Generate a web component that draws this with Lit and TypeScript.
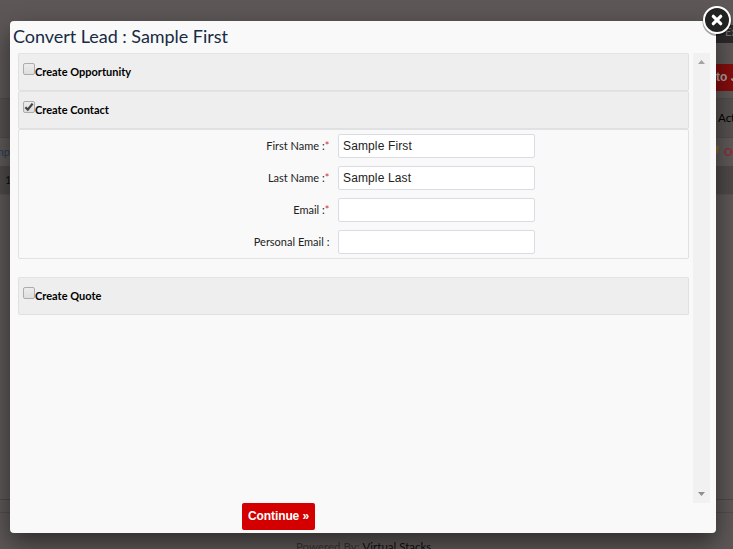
import { LitElement, html, css, svg, nothing } from "lit";
import { customElement, property } from "lit/decorators.js";

const FIELDS = [
  { label: "First Name :", required: true, value: "Sample First" },
  { label: "Last Name :", required: true, value: "Sample Last" },
  { label: "Email :", required: true, value: "" },
  { label: "Personal Email :", required: false, value: "" },
];

@customElement("section-bar")
class SectionBar extends LitElement {
  @property() label = "";
  @property({ type: Boolean }) checked = false;

  static styles = css`
    :host {
      display: flex;
      box-sizing: border-box;
      height: 38px;
      padding: 9px 0 0 4px;
      background: #eeeeee;
      border: 1px solid #dfe0e1;
      border-top-color: #e3e3e3;
      border-radius: 2px;
    }
    .box {
      flex: none;
      box-sizing: border-box;
      width: 12px;
      height: 12px;
      border: 1px solid #acacac;
      border-radius: 2px;
      background: linear-gradient(#ececec, #dedede);
    }
    .tick {
      display: block;
      width: 10px;
      height: 10px;
      overflow: visible;
    }
    .label {
      font: 700 11px/14px Lato, sans-serif;
      color: #000;
      margin-top: 2px;
      white-space: nowrap;
    }
  `;

  render() {
    return html`
      <span class="box">
        ${this.checked
          ? html`<svg class="tick" viewBox="0 0 10 10">
              ${svg`<path d="M1.4 5.2 3.8 7.6 8.6 1.6" fill="none" stroke="#444" stroke-width="2.3" />`}
            </svg>`
          : nothing}
      </span>
      <span class="label">${this.label}</span>
    `;
  }
}

@customElement("page-behind")
class PageBehind extends LitElement {
  static styles = css`
    :host {
      display: flex;
      flex-direction: column;
      height: 549px;
      background: #5d5857;
      font: 11px/14px Lato, sans-serif;
      overflow: hidden;
    }
    .row {
      flex: none;
      display: flex;
      justify-content: space-between;
      align-items: center;
      box-sizing: border-box;
    }
    .gap-a { height: 25px; }
    .nav { height: 18px; justify-content: flex-end; }
    .nav-end { width: 30px; height: 18px; background: #2b2929; color: #77706f; }
    .nav-text { padding-left: 22px; }
    .gap-b { height: 21px; }
    .actions { height: 27px; justify-content: flex-end; }
    .red {
      width: 33px;
      height: 27px;
      box-sizing: border-box;
      padding-left: 16px;
      background: #840d0d;
      color: #aaa09f;
      font: 700 12px/26px "Liberation Sans", sans-serif;
      white-space: nowrap;
      overflow: hidden;
    }
    .gap-c { height: 7px; }
    .head { height: 39px; background: #565150; border-top: 1px solid #504b4a; }
    .item { height: 29px; background: #5e5958; border-top: 1px solid #514c4b; }
    .total { height: 29px; background: #4e4948; border-bottom: 1px solid #575251; }
    .right { width: 15px; white-space: nowrap; overflow: hidden; color: #000; font-size: 11.5px; }
    .delete { display: flex; width: 19px; color: #8c2c34; gap: 5px; font-weight: 700; font-size: 11px; }
    .pencil { width: 5px; height: 12px; overflow: visible; }
    .link { width: 10px; display: flex; justify-content: flex-end; color: #293a51; }
    .num { width: 10px; padding-left: 5px; box-sizing: border-box; color: #111; }
    .gap-d { height: 304px; }
    .rule { height: 14px; border-top: 1px solid #4d4847; border-bottom: 1px solid #514c4b; }
    .footer {
      height: 36px;
      padding: 27px 0 0 296px;
      justify-content: flex-start;
      align-items: flex-start;
      white-space: nowrap;
      color: #353231;
      gap: 3px;
      font-size: 11.5px;
    }
    .brand { color: #0d0d0d; }
  `;

  render() {
    return html`
      <div class="row gap-a"></div>
      <div class="row nav"><div class="nav-end"><span class="nav-text">Ex</span></div></div>
      <div class="row gap-b"></div>
      <div class="row actions"><div class="red">to J</div></div>
      <div class="row gap-c"></div>
      <div class="row head"><span></span><span class="right">Act</span></div>
      <div class="row item">
        <span class="link">mp</span>
        <span class="delete">
          <svg class="pencil" viewBox="0 0 5 12">
            <path d="M2.5 0 5 1.5 4 7 1 11 0 11Z" fill="#84682d" />
          </svg>
          <span>O</span>
        </span>
      </div>
      <div class="row total"><span class="num">1</span></div>
      <div class="row gap-d"></div>
      <div class="row rule"></div>
      <div class="row footer"><span>Powered By:</span><span class="brand">Virtual Stacks</span></div>
    `;
  }
}

@customElement("app-root")
class AppRoot extends LitElement {
  static styles = css`
    :host {
      display: block;
      position: relative;
      width: 733px;
      height: 549px;
      overflow: hidden;
    }
    .modal {
      position: absolute;
      left: 10px;
      top: 21px;
      width: 706px;
      height: 512px;
      box-sizing: border-box;
      display: flex;
      flex-direction: column;
      background: #f9f9f9;
      border-radius: 4px;
      box-shadow: 0 10px 25px rgba(0, 0, 0, 0.5);
    }
    .title {
      margin: 0;
      height: 32px;
      padding-left: 3px;
      font: 400 18px/31px Lato, sans-serif;
      letter-spacing: -0.04px;
      color: #172b45;
      white-space: nowrap;
    }
    .body {
      display: flex;
      justify-content: space-between;
      height: 450px;
      padding: 0 6px 0 8px;
    }
    .content {
      width: 671px;
    }
    .form {
      display: flex;
      flex-direction: column;
      gap: 8px;
      box-sizing: border-box;
      height: 130px;
      padding-top: 4px;
      margin-bottom: 18px;
      border: 1px solid #e0e1e2;
      border-radius: 2px;
    }
    .field {
      display: grid;
      grid-template-columns: 311px 197px;
      column-gap: 8px;
      height: 24px;
    }
    .label {
      display: flex;
      justify-content: flex-end;
      padding-right: 0.6px;
      font: 11px/24px Lato, sans-serif;
      color: #222;
      white-space: nowrap;
    }
    .star { color: #d4303c; font-size: 11px; line-height: 24px; }
    .input {
      box-sizing: border-box;
      width: 197px;
      height: 24px;
      padding: 0 4px;
      border: 1px solid #d9dce2;
      border-radius: 2px;
      background: #fff;
      color: #222;
      font: 12px/22px "Liberation Sans", sans-serif;
      letter-spacing: 0.13px;
      outline: none;
    }
    .scroll {
      display: flex;
      flex-direction: column;
      justify-content: space-between;
      align-items: center;
      box-sizing: border-box;
      width: 17px;
      padding: 7px 0;
      background: #f1f1f1;
    }
    .arrow { width: 7px; height: 4px; display: block; }
    .continue {
      box-sizing: border-box;
      width: 73px;
      height: 27px;
      margin: 0 0 0 232px;
      padding: 0 0 1px;
      border: 0;
      border-radius: 2px;
      background: #d40000;
      color: #fff;
      font: 700 12px/26px "Liberation Sans", sans-serif;
      letter-spacing: -0.1px;
    }
    .close {
      position: absolute;
      left: 701px;
      top: 4px;
      width: 32px;
      height: 34px;
      overflow: visible;
    }
  `;

  render() {
    return html`
      <page-behind></page-behind>
      <div class="modal">
        <h1 class="title">Convert Lead : Sample First</h1>
        <div class="body">
          <div class="content">
            <section-bar label="Create Opportunity"></section-bar>
            <section-bar label="Create Contact" checked></section-bar>
            <div class="form">
              ${FIELDS.map(
                (f) => html`<label class="field">
                  <span class="label">${f.label}${f.required ? html`<span class="star">*</span>` : nothing}</span>
                  <input class="input" .value=${f.value} />
                </label>`
              )}
            </div>
            <section-bar label="Create Quote"></section-bar>
          </div>
          <div class="scroll">
            <svg class="arrow" viewBox="0 0 7 4"><path d="M0 4 3.5 0 7 4Z" fill="#a3a3a3" /></svg>
            <svg class="arrow" viewBox="0 0 7 4"><path d="M0 0 3.5 4 7 0Z" fill="#8f8f8f" /></svg>
          </div>
        </div>
        <button class="continue">Continue »</button>
      </div>
      <svg class="close" viewBox="0 0 32 34">
        <circle cx="16" cy="17.5" r="14.5" fill="#000" opacity="0.35" />
        <circle cx="16" cy="16" r="13" fill="#222" stroke="#fff" stroke-width="2" />
        <path d="M12.3 12.3 19.7 19.7M19.7 12.3 12.3 19.7" stroke="#fff" stroke-width="3.2" stroke-linecap="round" />
      </svg>
    `;
  }
}
